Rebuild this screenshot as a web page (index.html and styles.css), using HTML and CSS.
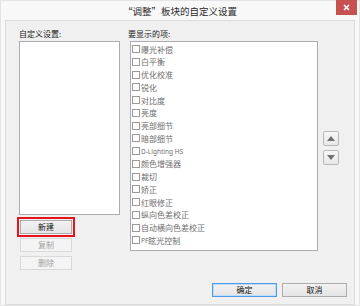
FILE: index.html
```html
<!DOCTYPE html>
<html lang="zh-CN">
<head>
    <meta charset="UTF-8">
    <meta name="viewport" content="width=device-width, initial-scale=1.0">
    <title>“调整”板块的自定义设置</title>
    <link rel="stylesheet" href="styles.css">
</head>
<body>
    <div class="window">
        <div class="titlebar">
            <span class="title">“调整”板块的自定义设置</span>
            <button class="close" type="button">
                <svg width="7" height="7" viewBox="0 0 7 7"><path d="M1 1L6 6M6 1L1 6" stroke="#fff" stroke-width="1.6"/></svg>
            </button>
        </div>

        <div class="client">
            <div class="main">
                <div class="left">
                    <div class="label">自定义设置:</div>
                    <div class="listbox presets"></div>
                    <div class="side-buttons">
                        <button class="btn highlight" type="button">新建</button>
                        <button class="btn" type="button" disabled>复制</button>
                        <button class="btn" type="button" disabled>删除</button>
                    </div>
                </div>

                <div class="right">
                    <div class="label">要显示的项:</div>
                    <div class="right-row">
                        <ul class="listbox items">
                            <li><span class="check"></span>曝光补偿</li>
                            <li><span class="check"></span>白平衡</li>
                            <li><span class="check"></span>优化校准</li>
                            <li><span class="check"></span>锐化</li>
                            <li><span class="check"></span>对比度</li>
                            <li><span class="check"></span>亮度</li>
                            <li><span class="check"></span>亮部细节</li>
                            <li><span class="check"></span>暗部细节</li>
                            <li><span class="check"></span><span class="latin">D-Lighting HS</span></li>
                            <li><span class="check"></span>颜色增强器</li>
                            <li><span class="check"></span>裁切</li>
                            <li><span class="check"></span>矫正</li>
                            <li><span class="check"></span>红眼修正</li>
                            <li><span class="check"></span>纵向色差校正</li>
                            <li><span class="check"></span>自动横向色差校正</li>
                            <li><span class="check"></span><span class="latin">PF</span>眩光控制</li>
                        </ul>
                        <div class="arrows">
                            <button class="arrow" type="button">
                                <svg width="8" height="5" viewBox="0 0 8 5"><path d="M4 0L8 5H0Z" fill="#6f6f6f"/></svg>
                            </button>
                            <button class="arrow" type="button">
                                <svg width="8" height="5" viewBox="0 0 8 5"><path d="M0 0H8L4 5Z" fill="#6f6f6f"/></svg>
                            </button>
                        </div>
                    </div>
                </div>
            </div>

            <div class="footer">
                <button class="btn wide default" type="button">确定</button>
                <button class="btn wide" type="button">取消</button>
            </div>
        </div>
    </div>
</body>
</html>
```

FILE: styles.css
```css
body {
    margin: 0;
    background-color: #ffffff;
    font-family: "Noto Sans CJK SC", "Noto Sans", sans-serif;
}
.window {
    width: 358px;
    height: 304px;
    border: 1px solid #e4e4e4;
    background-color: #f8f8f8;
    display: flex;
    flex-direction: column;
}
.titlebar {
    height: 19px;
    position: relative;
    display: flex;
    justify-content: center;
    align-items: center;
}
.title {
    font-size: 9.5px;
    color: #2b2b2b;
    padding-top: 2px;
}
.close {
    position: absolute;
    top: -1px;
    right: 2px;
    width: 21px;
    height: 15px;
    border: none;
    padding: 0;
    background-color: #c75050;
    display: flex;
    align-items: center;
    justify-content: center;
}
.client {
    margin: 0 4px;
    height: 282px;
    border: 1px solid #dcdcdc;
    background-color: #f0f0f0;
    padding: 6px 6px 0 0;
    display: flex;
    flex-direction: column;
}
.main {
    display: flex;
    align-items: flex-start;
}
.label {
    font-size: 8px;
    line-height: 14px;
    height: 14px;
    color: #1a1a1a;
}
.left {
    width: 109px;
    padding-left: 13px;
}
.listbox {
    border: 1px solid #abadb3;
    background-color: #ffffff;
    box-sizing: border-box;
}
.presets {
    width: 101px;
    height: 174px;
}
.side-buttons {
    display: flex;
    flex-direction: column;
    gap: 4px;
    margin-top: 5px;
    padding-left: 1px;
}
.btn {
    width: 52px;
    height: 14px;
    padding: 0;
    font-family: inherit;
    font-size: 8px;
    line-height: 12px;
    color: #111;
    border: 1px solid #adadad;
    background: linear-gradient(#f2f2f2, #e5e5e5);
}
.btn:disabled {
    color: #a3a3a3;
    border-color: #d9d9d9;
    background: #f4f4f4;
}
.highlight {
    outline: 2px solid #e8141b;
    outline-offset: 1px;
}
.right {
    display: flex;
    flex-direction: column;
}
.right-row {
    display: flex;
    align-items: flex-start;
    gap: 5px;
    padding-left: 2px;
}
.items {
    width: 188px;
    height: 210px;
    margin: 0;
    padding: 1px 0 0 1px;
    list-style: none;
}
.items li {
    height: 12.75px;
    display: flex;
    align-items: center;
    font-size: 8px;
    color: #6e6e6e;
    white-space: nowrap;
}
.check {
    width: 8px;
    height: 8px;
    box-sizing: border-box;
    border: 1px solid #9a9a9a;
    background-color: #fff;
    margin-right: 1px;
    flex-shrink: 0;
}
.latin {
    font-family: "Noto Sans", sans-serif;
    font-size: 6.5px;
}
.arrows {
    margin-top: 90px;
    display: flex;
    flex-direction: column;
    gap: 4px;
}
.arrow {
    width: 16px;
    height: 15px;
    padding: 0;
    border: 1px solid #b9b9b9;
    border-radius: 2px;
    background: linear-gradient(#f7f7f7, #e8e8e8);
    display: flex;
    align-items: center;
    justify-content: center;
}
.footer {
    display: flex;
    justify-content: flex-end;
    gap: 5px;
    margin-top: 13px;
    padding-right: 1px;
}
.wide {
    width: 65px;
}
.default {
    border-color: #4d9be6;
    box-shadow: inset 0 0 0 1px #bcdcfa;
}
```
